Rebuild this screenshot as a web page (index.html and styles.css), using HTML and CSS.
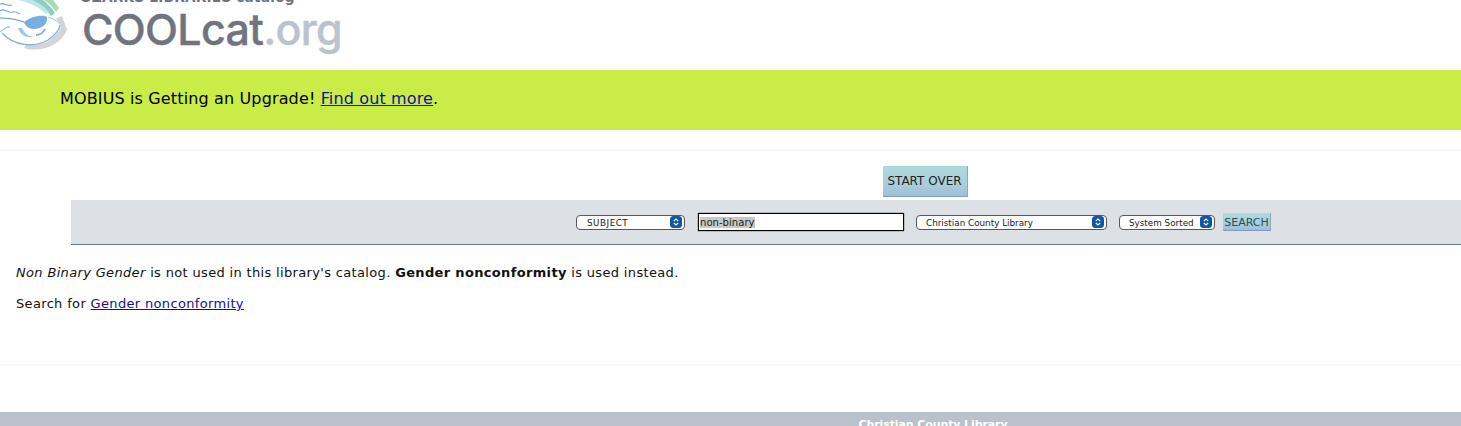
FILE: index.html
```html
<!DOCTYPE html>
<html>
<head>
    <meta charset="UTF-8" />
    <title>COOLcat.org</title>
    <link rel="stylesheet" href="styles.css">
</head>
<body>
<div id="header">
    <svg class="logo" viewBox="0 0 70 52" width="70" height="52">
        <path d="M24 48 C40 53 60 46 67 30 L62 16 L52 20 L30 38 Z" fill="#b4b8bc" opacity="0.6"/>
        <path d="M0 2 C22 -4 46 2 60 24 C62 30 56 35 50 40 C38 49 16 46 0 32 Z" fill="#fff"/>
        <path d="M28 0 C38 3 46 9 51 16 L55 13 C51 7 47 3 43 0 Z" fill="#8ad0c0"/>
        <path d="M44 0 C50 4 53 8 56 12 L59 8 C57 5 55 2 53 0 Z" fill="#a8dcb0"/>
        <path d="M18 0 C30 2 40 8 46 14 L49 12 C44 6 38 2 32 0 Z" fill="#bfe4ea"/>
        <path d="M24 22 C30 17 42 14 47 17 C48 24 42 29 34 29 C29 29 25 26 24 22 Z" fill="#79aee2"/>
        <path d="M0 18 C8 18 16 19 24 22" fill="none" stroke="#5f93cc" stroke-width="1.1"/>
        <path d="M0 11 C4 7 8 14 13 12 C16 11 18 13 20 14" fill="none" stroke="#6fa6d6" stroke-width="1.1"/>
        <path d="M0 4 C4 2 8 7 12 5" fill="none" stroke="#6fa6d6" stroke-width="1.1"/>
        <path d="M0 32 C4 30 6 26 10 27" fill="none" stroke="#8fbce6" stroke-width="1.1"/>
        <path d="M18 28 C20 34 25 38 33 37 C27 36 24 32 22 28 Z" fill="#9cc6ea"/>
        <path d="M2 33 C14 46 34 48 48 40 C54 36 59 31 60 25" fill="none" stroke="#7fb2e0" stroke-width="1.4"/>
        <path d="M36 35 C40 35 43 33 45 29" fill="none" stroke="#7fb2e0" stroke-width="1.8"/>
        <path d="M48 17 C53 18 57 21 60 24" fill="none" stroke="#a9cdea" stroke-width="1.1"/>
    </svg>
    <div class="brand">
        <div class="tagline">OZARKS LIBRARIES catalog</div>
        <div class="wordmark">COOLcat<span>.org</span></div>
    </div>
</div>

<div id="banner">MOBIUS is Getting an Upgrade! <a href="#">Find out more</a>.</div>

<div class="rule first"></div>

<div class="startover"><a href="#" class="button big">START OVER</a></div>

<form id="searchbar">
    <div class="select subject"><span>SUBJECT</span>
        <svg class="arrows" viewBox="0 0 12 12" width="12" height="12"><rect width="12" height="12" rx="3.5" fill="#0f56a8"/><path d="M3.8 5 L6 3 L8.2 5 M3.8 7 L6 9 L8.2 7" fill="none" stroke="#fff" stroke-width="1.1"/></svg>
    </div>
    <div class="term"><span>non-binary</span></div>
    <div class="select library"><span>Christian County Library</span>
        <svg class="arrows" viewBox="0 0 12 12" width="12" height="12"><rect width="12" height="12" rx="3.5" fill="#0f56a8"/><path d="M3.8 5 L6 3 L8.2 5 M3.8 7 L6 9 L8.2 7" fill="none" stroke="#fff" stroke-width="1.1"/></svg>
    </div>
    <div class="select sort"><span>System Sorted</span>
        <svg class="arrows" viewBox="0 0 12 12" width="12" height="12"><rect width="12" height="12" rx="3.5" fill="#0f56a8"/><path d="M3.8 5 L6 3 L8.2 5 M3.8 7 L6 9 L8.2 7" fill="none" stroke="#fff" stroke-width="1.1"/></svg>
    </div>
    <a href="#" class="button small">SEARCH</a>
</form>

<div id="content">
    <p><i>Non Binary Gender</i> is not used in this library's catalog. <b>Gender nonconformity</b> is used instead.</p>
    <p>Search for <a href="#">Gender nonconformity</a></p>
</div>

<div class="rule"></div>

<div id="footer">Christian County Library</div>
</body>
</html>
```

FILE: styles.css
```css
* {
    font-family: "DejaVu Sans", Verdana, sans-serif;
    margin: 0;
    padding: 0;
    box-sizing: border-box;
}

html, body {
    height: 426px;
    overflow: hidden;
    background-color: #fff;
}

a { color: #10109a; }

#header {
    display: flex;
    height: 70px;
    overflow: hidden;
}

.logo {
    flex: none;
    overflow: visible;
}

.brand {
    margin-left: 10px;
    margin-top: -11px;
}

.tagline {
    font-size: 13.7px;
    line-height: 16px;
    font-weight: bold;
    color: #6f747c;
    letter-spacing: 0.2px;
}

.wordmark {
    padding-left: 2px;
    font-family: Inter, sans-serif;
    font-size: 43px;
    line-height: 48px;
    font-weight: 500;
    color: #70747d;
    letter-spacing: -0.7px;
    -webkit-text-stroke: 0.4px #70747d;
}

.wordmark span {
    font-family: Inter, sans-serif;
    color: #bcc3ce;
    -webkit-text-stroke: 0.4px #bcc3ce;
}

#banner {
    height: 60px;
    padding-left: 60px;
    line-height: 58px;
    font-size: 16px;
    letter-spacing: 0.14px;
    background-color: #c9ec47;
    color: #000;
}

.rule {
    height: 2px;
    background-color: #f7f7f7;
}

.rule.first { margin-top: 19px; }

.startover {
    display: flex;
    justify-content: center;
    padding: 15px 0 3px 389px;
}

.button {
    display: block;
    border-bottom: 1px solid #7d9cc0;
    border-right: 1px solid #8aa6c4;
    background: linear-gradient(#aedadb, #a9cfdb 60%, #9fbcd8);
    color: #222;
    text-decoration: none;
    text-align: center;
}

.button.big {
    width: 85px;
    height: 31px;
    line-height: 31px;
    font-size: 12px;
}

.button.small {
    width: 48px;
    height: 18px;
    line-height: 19px;
    font-size: 11px;
    color: #2b4a5a;
    margin-left: 8px;
}

#searchbar {
    display: flex;
    align-items: center;
    height: 45px;
    margin-left: 71px;
    padding: 0 0 0 505px;
    background-color: #dde1e6;
    border-bottom: 1px solid #5f7c91;
}

.select {
    display: flex;
    align-items: center;
    justify-content: space-between;
    height: 15px;
    padding: 0 2px 0 9px;
    background-color: #fff;
    border: 1px solid #55585c;
    border-radius: 4px;
    font-size: 8.8px;
    color: #222;
}

.select span {
    padding-top: 1px;
    white-space: nowrap;
}

.arrows { flex: none; }

.select.subject { width: 109px; padding-left: 10px; }
.select.subject span { letter-spacing: 0.5px; }
.select.library { width: 191px; margin-left: 12px; }
.select.sort { width: 96px; margin-left: 12px; }

.term {
    width: 206px;
    height: 18px;
    margin-left: 13px;
    padding-left: 1px;
    background-color: #fff;
    border: 1px solid #000;
    box-shadow: 0 0 1px #000;
    font-size: 10.1px;
    line-height: 17px;
    color: #222;
}

.term span { background-color: #c9c9c9; }

#content {
    height: 119px;
    padding: 20px 0 0 16px;
    font-size: 13px;
    line-height: 16px;
    letter-spacing: 0.34px;
    color: #111;
}

#content p { margin-bottom: 15px; }

#footer {
    height: 14px;
    margin-top: 46px;
    padding-left: 405px;
    padding-top: 6px;
    text-align: center;
    font-size: 11px;
    font-weight: bold;
    letter-spacing: -0.1px;
    color: #fff;
    background-color: #b9c1cb;
    overflow: hidden;
}
```
